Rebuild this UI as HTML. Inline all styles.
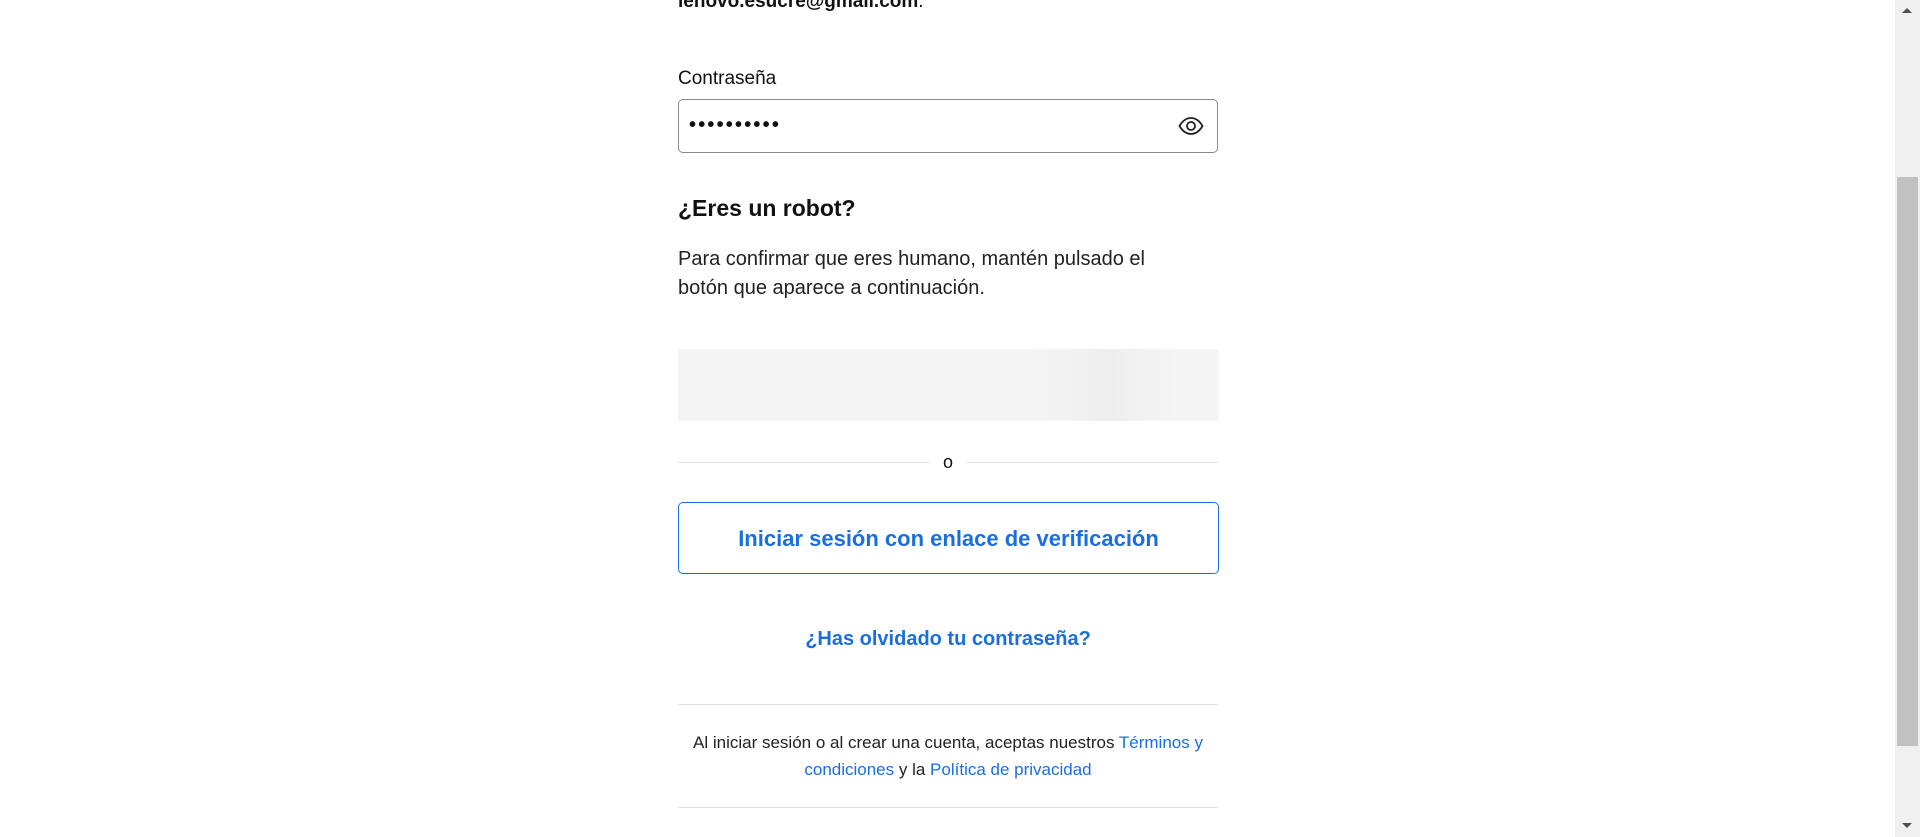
<!DOCTYPE html>
<html><head><meta charset="utf-8"><style>
html,body{margin:0;padding:0;width:1920px;height:837px;overflow:hidden;background:#fff;font-family:"Liberation Sans",sans-serif;color:#111}
.a{position:absolute}
.c{left:678px;width:540px}
a{color:#1a6fe0;text-decoration:none}
</style></head><body>
<div class="a c" style="top:-10px;font-size:19px;font-weight:bold;line-height:24px">lenovo.esucre@gmail.com<span style="font-weight:normal">.</span></div>
<div class="a c" style="top:67px;font-size:19px;line-height:24px">Contraseña</div>
<div class="a c" style="top:99px;height:52px;width:538px;border:1px solid #8a8a8a;border-radius:5px"></div>
<div class="a" style="left:689px;top:112px;font-size:20px;letter-spacing:2.2px;line-height:26px;font-weight:bold">••••••••••</div>
<svg class="a" style="left:1178px;top:116px" width="26" height="20" viewBox="0 0 26 20"><path d="M1.5 10C5 4 9 2 13 2s8 2 11.5 8C21 16 17 18 13 18S5 16 1.5 10Z" fill="none" stroke="#222" stroke-width="1.8"/><circle cx="13" cy="10" r="4" fill="none" stroke="#222" stroke-width="1.8"/></svg>
<div class="a c" style="top:194px;font-size:23px;font-weight:bold;line-height:28px">¿Eres un robot?</div>
<div class="a c" style="top:245px;font-size:20px;line-height:29px;color:#222">Para confirmar que eres humano, mantén pulsado el<br>botón que aparece a continuación.</div>
<div class="a c" style="top:349px;height:72px;width:541px;background:linear-gradient(90deg,#f5f5f5 0%,#f5f5f5 65%,#eeeeee 80%,#f5f5f5 92%,#f5f5f5 100%)"></div>
<div class="a" style="left:678px;top:462px;width:251px;height:1px;background:#e3e3e3"></div>
<div class="a" style="left:967px;top:462px;width:251px;height:1px;background:#e3e3e3"></div>
<div class="a" style="left:938px;top:451px;width:20px;text-align:center;font-size:18px;line-height:22px">o</div>
<div class="a c" style="top:502px;height:70px;width:539px;border:1px solid #1a6fe0;border-radius:5px;text-align:center;line-height:72px;font-size:22px;font-weight:bold;color:#1a6fe0">Iniciar sesión con enlace de verificación</div>
<div class="a c" style="top:626px;text-align:center;font-size:20px;font-weight:bold;line-height:26px"><a>¿Has olvidado tu contraseña?</a></div>
<div class="a" style="left:678px;top:704px;width:540px;height:1px;background:#e3e3e3"></div>
<div class="a c" style="top:729px;text-align:center;font-size:17px;line-height:27px;color:#222">Al iniciar sesión o al crear una cuenta, aceptas nuestros <a>Términos y condiciones</a> y la <a>Política de privacidad</a></div>
<div class="a" style="left:678px;top:807px;width:540px;height:1px;background:#e3e3e3"></div>
<div class="a" style="left:1895px;top:0;width:25px;height:837px;background:#f0f0f0"></div>
<div class="a" style="left:1897px;top:177px;width:21px;height:569px;background:#c1c1c1"></div>
<div class="a" style="left:1902px;top:8px;width:0;height:0;border-left:5px solid transparent;border-right:5px solid transparent;border-bottom:5px solid #505050"></div>
<div class="a" style="left:1902px;top:823px;width:0;height:0;border-left:5px solid transparent;border-right:5px solid transparent;border-top:5px solid #505050"></div>
</body></html>
